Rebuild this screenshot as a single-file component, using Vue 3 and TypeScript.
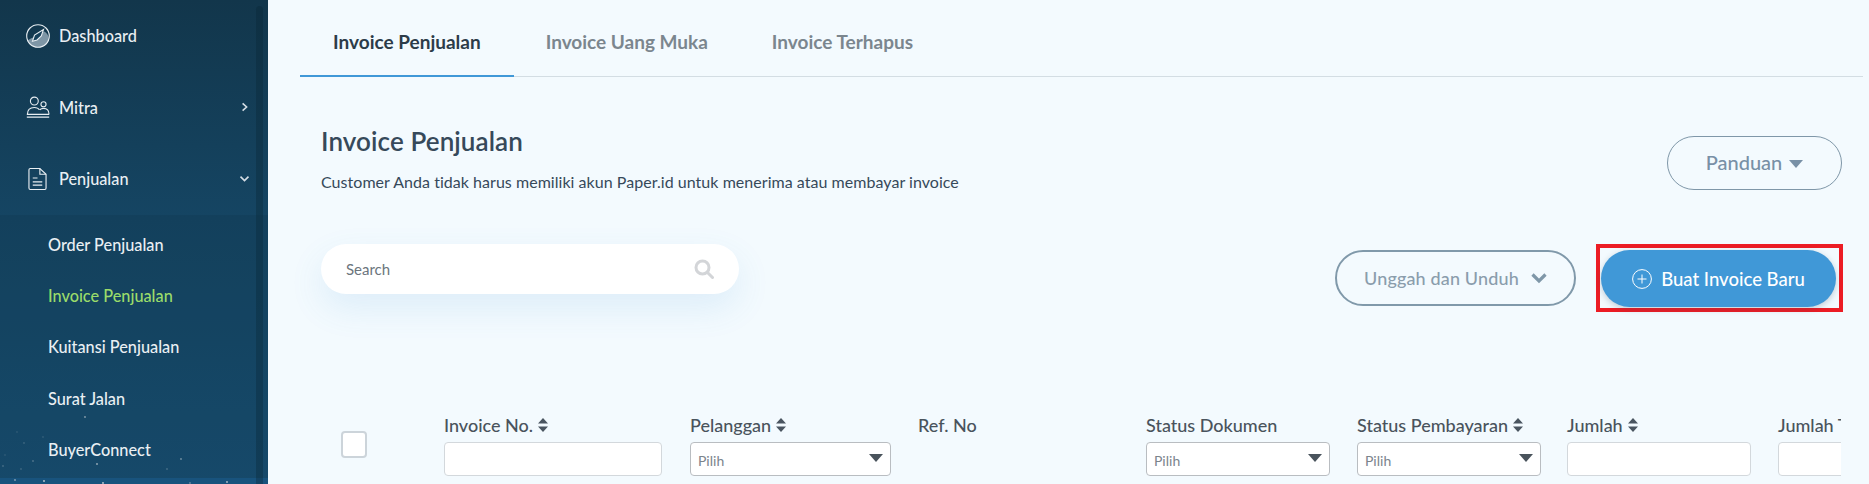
<script setup lang="ts">
interface Col { label: string; sort: boolean; kind: 'input' | 'select' | 'none'; slot: number; width: number }
const tabs = ['Invoice Penjualan', 'Invoice Uang Muka', 'Invoice Terhapus']
const subs = ['Order Penjualan', 'Invoice Penjualan', 'Kuitansi Penjualan', 'Surat Jalan', 'BuyerConnect']
const cols: Col[] = [
  { label: 'Invoice No.', sort: true, kind: 'input', slot: 246, width: 218 },
  { label: 'Pelanggan', sort: true, kind: 'select', slot: 228, width: 201 },
  { label: 'Ref. No', sort: false, kind: 'none', slot: 228, width: 200 },
  { label: 'Status Dokumen', sort: false, kind: 'select', slot: 211, width: 184 },
  { label: 'Status Pembayaran', sort: true, kind: 'select', slot: 210, width: 184 },
  { label: 'Jumlah', sort: true, kind: 'input', slot: 211, width: 184 },
  { label: 'Jumlah Tertagih', sort: true, kind: 'input', slot: 184, width: 184 },
]
const stars: number[][] = [
  [85, 417, 0.6], [33, 461, 0.3], [97, 464, 0.7], [181, 459, 0.5], [167, 469, 0.25], [3, 466, 0.25],
  [21, 469, 0.2], [24, 443, 0.2], [43, 437, 0.15], [17, 432, 0.12], [5, 455, 0.12],
  [15, 480, 0.6], [44, 481, 0.9], [103, 483, 0.9], [190, 483, 0.4], [227, 482, 0.8],
]
</script>

<template>
  <div class="page">
    <aside class="sidebar">
      <div class="strip"></div>
      <svg class="stars" width="256" height="484" viewBox="0 0 256 484">
        <circle v-for="(s, i) in stars" :key="i" :cx="s[0]" :cy="s[1]" r="0.9" fill="#ffffff" :opacity="s[2]" />
      </svg>
      <div class="scroll"></div>
      <nav class="menu">
        <div class="item">
          <svg class="ico" viewBox="0 0 24 24" width="24" height="24" fill="none" stroke="#e8eef2" stroke-width="1.1">
            <path d="M1.300 16.500c2.500-1.700 4.500-2.300 7-3.500 3-1.500 7-5 10-5.500 2.500 1.500 4.500 4 4.500 6.500 0 6-5 9.500-10.800 9.500-4.500 0-8.500-2.800-10.700-7z" fill="#7e96a6" stroke="none" />
            <circle cx="12" cy="12" r="11.300" />
            <path d="M17.500 5.500l-2.200 6.500-4.300 4-4.500 1.200 2-6.200z" fill="#15405a" />
          </svg>
          <span>Dashboard</span>
        </div>
        <div class="item">
          <svg class="ico" viewBox="0 0 26 24" width="24" height="22" fill="none" stroke="#e8eef2" stroke-width="1.200">
            <circle cx="9" cy="5.500" r="4.300" />
            <circle cx="19" cy="9" r="2.800" />
            <path d="M1.500 20c0-4.500 2-7.500 7.500-7.500 3 0 4.500.8 5.500 2.500M15 15c1-1 2-1.500 4-1.500 4 0 6 2.500 6 6.500" />
            <path d="M.8 20h24.400M.8 23h24.400" stroke-width="1.500" />
          </svg>
          <span>Mitra</span>
          <svg class="caret" viewBox="0 0 10 12" width="8" height="11" fill="none" stroke="#d5dee5" stroke-width="2"><path d="M2 1.500l5 4.500-5 4.500" /></svg>
        </div>
        <div class="item">
          <svg class="ico doc" viewBox="0 0 20 24" width="19" height="23" fill="none" stroke="#e8eef2" stroke-width="1.200">
            <path d="M2.500 1h10l6.500 6v14.500c0 1-.6 1.500-1.300 1.500H2.500c-.8 0-1.500-.6-1.500-1.500V2.200C1 1.500 1.700 1 2.500 1z" />
            <path d="M12.500 1v6H19M5 11h5M5 15h10M5 18.500h10" />
          </svg>
          <span>Penjualan</span>
          <svg class="caret down" viewBox="0 0 12 10" width="11" height="8" fill="none" stroke="#d5dee5" stroke-width="2"><path d="M1 2l5 5 5-5" /></svg>
        </div>
      </nav>
      <div class="submenu">
        <a v-for="s in subs" :key="s" class="sub" :class="{ on: s === 'Invoice Penjualan' }">{{ s }}</a>
      </div>
    </aside>

    <main class="main">
      <div class="tabs">
        <div v-for="(t, i) in tabs" :key="t" class="tab" :class="{ active: i === 0 }">{{ t }}</div>
      </div>

      <div class="head">
        <div>
          <h1>Invoice Penjualan</h1>
          <p>Customer Anda tidak harus memiliki akun Paper.id untuk menerima atau membayar invoice</p>
        </div>
        <button class="guide">Panduan <i class="tri"></i></button>
      </div>

      <div class="tools">
        <div class="search">
          <span>Search</span>
          <svg viewBox="0 0 20 20" width="20" height="20" fill="none" stroke="#d3d5d8" stroke-width="3"><circle cx="8.500" cy="8.500" r="6.500" /><path d="M13.500 13.500l5 5" stroke-linecap="round" /></svg>
        </div>
        <div class="actions">
          <button class="updown">Unggah dan Unduh
            <svg viewBox="0 0 16 12" width="16" height="12" fill="none" stroke="#7f97a8" stroke-width="3.200"><path d="M1.500 2.500l6.500 6.500 6.500-6.500" /></svg>
          </button>
          <div class="mark">
            <button class="create">
              <svg viewBox="0 0 20 20" width="20" height="20" fill="none" stroke="#fff" stroke-width="1"><circle cx="10" cy="10" r="9.400" /><path d="M10 5.500v9M5.500 10h9" /></svg>
              Buat Invoice Baru
            </button>
          </div>
        </div>
      </div>

      <div class="table">
        <label class="check"></label>
        <div v-for="c in cols" :key="c.label" class="col" :style="{ flexBasis: c.slot + 'px' }">
          <div class="th">{{ c.label }}
            <svg v-if="c.sort" viewBox="0 0 10 14" width="10" height="14" fill="#4a5560"><path d="M5 0l5 5.500H0zM5 14l5-5.500H0z" /></svg>
          </div>
          <div v-if="c.kind === 'input'" class="field" :style="{ width: c.width + 'px' }"></div>
          <div v-else-if="c.kind === 'select'" class="field sel" :style="{ width: c.width + 'px' }"><span>Pilih</span><i class="tri dark"></i></div>
        </div>
      </div>
    </main>
  </div>
</template>

<style>
html, body { margin: 0; overflow: hidden; }
</style>

<style scoped>
.page {
  display: flex;
  width: 1869px;
  height: 484px;
  overflow: hidden;
  background: #f3fafe;
  font-family: Lato, "Liberation Sans", sans-serif;
}
.sidebar {
  position: relative;
  flex: 0 0 268px;
  height: 484px;
  overflow: hidden;
  color: #e9eff3;
  background: linear-gradient(180deg, #12364b 0%, #154563 45%, #195074 100%);
}
.strip { position: absolute; left: 0; right: 0; bottom: 0; height: 6px; background: #1c5c8c; }
.stars { position: absolute; left: 0; top: 0; }
.scroll {
  position: absolute;
  left: 256px;
  top: 6px;
  width: 7px;
  height: 478px;
  border-radius: 4px 4px 0 0;
  background: rgba(10, 36, 52, 0.35);
}
.menu { height: 215px; }
.item {
  position: relative;
  display: flex;
  align-items: center;
  height: 71.5px;
  padding-left: 59px;
  font-size: 16.3px;
  font-weight: 500;
}
.ico { position: absolute; left: 26px; top: 50%; transform: translateY(-50%); }
.ico.doc { left: 28px; }
.caret { position: absolute; left: 241px; top: 50%; transform: translateY(-50%); }
.caret.down { left: 239px; }
.submenu {
  position: relative;
  height: 269px;
  padding: 4px 0 0 48px;
  box-sizing: border-box;
  background: rgba(12, 42, 62, 0.18);
}
.sub {
  display: flex;
  align-items: center;
  height: 51.2px;
  font-size: 16.3px;
  font-weight: 500;
  transform: translateY(-0.5px);
}
.sub.on { color: #9bdc6a; }

.main { flex: 1; min-width: 0; padding: 0 28px 0 32px; }
.tabs { display: flex; height: 77px; box-sizing: border-box; border-bottom: 1px solid #d3dde3; margin-right: -22px; }
.tab {
  height: 77px;
  box-sizing: border-box;
  padding: 30px 32px 0;
  font-size: 19px;
  font-weight: 700;
  color: #7b868e;
  line-height: 24px;
}
.tab.active { padding: 30px 33px 0; color: #2c3c49; border-bottom: 2px solid #4098d7; }
.head { display: flex; justify-content: space-between; align-items: flex-start; padding: 49px 0 0 21px; height: 167px; box-sizing: border-box; margin-right: -1px; }
h1 { margin: 0; font-size: 26px; font-weight: 600; color: #36495a; line-height: 30px; letter-spacing: 0.1px; }
p { margin: 16px 0 0; font-size: 16px; color: #36495a; line-height: 20px; letter-spacing: 0.04px; }
.guide {
  width: 175px;
  height: 54px;
  margin-top: 10px;
  padding: 0 0 2px;
  border: 1px solid #7f97a8;
  border-radius: 27px;
  background: transparent;
  color: #7890a6;
  font: 500 20px Lato, sans-serif;
}
.tri {
  display: inline-block;
  width: 0; height: 0;
  border-left: 7px solid transparent;
  border-right: 7px solid transparent;
  border-top: 8px solid #7890a6;
  vertical-align: 2px;
  margin-left: 2px;
}
.tools { display: flex; justify-content: space-between; align-items: flex-start; padding-left: 21px; height: 171px; box-sizing: border-box; margin-right: -2px; }
.search {
  display: flex;
  align-items: center;
  justify-content: space-between;
  width: 418px;
  height: 50px;
  padding: 0 25px;
  box-sizing: border-box;
  border-radius: 25px;
  background: #fff;
  box-shadow: 0 14px 34px rgba(64, 152, 215, 0.12);
  color: #6c757d;
  font-size: 15px;
}
.actions { display: flex; align-items: flex-start; gap: 20px; }
.updown {
  display: flex;
  align-items: center;
  justify-content: center;
  gap: 12px;
  width: 241px;
  height: 56px;
  margin-top: 6px;
  border: 2px solid #8099aa;
  border-radius: 28px;
  background: transparent;
  color: #8a9dac;
  font: 500 18px Lato, sans-serif;
  letter-spacing: 0.15px;
}
.mark { border: 4px solid #ec1c24; padding: 2px 3px 1px 1px; }
.create {
  display: flex;
  align-items: center;
  justify-content: center;
  gap: 9px;
  width: 235px;
  height: 57px;
  border: 0;
  border-radius: 29px;
  background: #4098d7;
  color: #fff;
  font: 500 18.5px Lato, sans-serif;
  box-shadow: 0 2px 6px rgba(40, 70, 100, 0.25);
}
.table { display: flex; overflow: hidden; }
.check {
  flex: 0 0 auto;
  width: 26px;
  height: 27px;
  margin: 16px 77px 0 41px;
  box-sizing: border-box;
  border: 2px solid #ccd4da;
  border-radius: 4px;
  background: #fff;
}
.col { flex: 0 0 auto; }
.th {
  display: flex;
  align-items: center;
  gap: 5px;
  height: 22px;
  margin: -1px 0 6px;
  font-size: 18px;
  font-weight: 500;
  color: #49535c;
  white-space: nowrap;
}
.field {
  position: relative;
  display: flex;
  align-items: center;
  height: 34px;
  padding: 2px 7px 0;
  box-sizing: border-box;
  border: 1px solid #d3d8dc;
  border-radius: 4px;
  background: #fff;
  font-size: 14px;
  color: #7b848c;
}
.field.sel { border-color: #b9bdc1; }
.tri.dark { position: absolute; right: 7px; top: 11px; border-top-color: #49535c; margin: 0; }
</style>
